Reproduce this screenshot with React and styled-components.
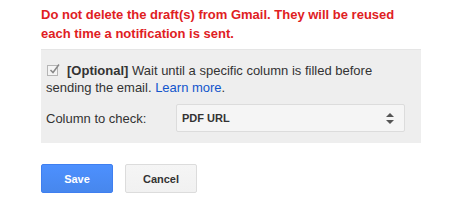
import React from "react";
import styled, { createGlobalStyle } from "styled-components";

const GlobalStyle = createGlobalStyle`
  body {
    margin: 0;
    background: #fff;
    font-family: Arial, "Liberation Sans", sans-serif;
  }
`;

const Page = styled.div`
  width: 380px;
  padding: 5px 0 0 41px;
`;

const Warning = styled.p`
  margin: 0 0 6px;
  color: #e0201f;
  font-size: 13px;
  font-weight: bold;
  line-height: 19px;
`;

const Panel = styled.div`
  background: #eeeeee;
  border-top: 1px solid #e5e5e5;
  padding: 12px 16px 11px 5px;
`;

const OptionText = styled.div`
  font-size: 13px;
  line-height: 17px;
  color: #333;
`;

const Check = styled.span`
  display: inline-block;
  vertical-align: -1px;
  width: 11px;
  height: 11px;
  margin: 0 9px 0 1px;
  border: 1px solid #b5b5b5;
  background: #f4f4f4;
  box-sizing: border-box;
  position: relative;

  svg {
    position: absolute;
    left: 0;
    top: -3px;
  }
`;

const Strong = styled.b`
  font-weight: bold;
`;

const LearnLink = styled.a`
  color: #1155cc;
  text-decoration: none;
`;

const FieldRow = styled.div`
  display: flex;
  align-items: center;
  margin-top: 8px;
`;

const FieldLabel = styled.label`
  width: 130px;
  font-size: 13px;
  color: #333;
`;

const Select = styled.div`
  flex: 1;
  height: 28px;
  box-sizing: border-box;
  border: 1px solid #dcdcdc;
  border-radius: 2px;
  background: #f5f5f5;
  display: flex;
  align-items: center;
  justify-content: space-between;
  padding: 0 10px 0 5px;
  font-size: 11px;
  font-weight: bold;
  color: #333;
`;

const Buttons = styled.div`
  display: flex;
  gap: 12px;
  margin-top: 21px;
`;

const Button = styled.button`
  width: 72px;
  height: 29px;
  box-sizing: border-box;
  border-radius: 2px;
  font-family: Arial, "Liberation Sans", sans-serif;
  font-size: 11px;
  font-weight: bold;
  padding: 0;
  border: 1px solid ${(p) => (p.$primary ? "#3f7ff0" : "#dcdcdc")};
  background: ${(p) =>
    p.$primary
      ? "linear-gradient(#4d90fe, #4787ed)"
      : "linear-gradient(#f5f5f5, #f1f1f1)"};
  color: ${(p) => (p.$primary ? "#fff" : "#333")};
`;

export default function App() {
  return (
    <Page>
      <GlobalStyle />
      <Warning>
        Do not delete the draft(s) from Gmail. They will be reused each time a
        notification is sent.
      </Warning>
      <Panel>
        <OptionText>
          <Check>
            <svg width="12" height="12" viewBox="0 0 12 12">
              <path
                d="M2.5 7 L5 9.5 L11 1.5"
                fill="none"
                stroke="#888"
                strokeWidth="1.5"
              />
            </svg>
          </Check>
          <Strong>[Optional]</Strong> Wait until a specific column is filled
          before sending the email. <LearnLink href="#">Learn more</LearnLink>.
        </OptionText>
        <FieldRow>
          <FieldLabel>Column to check:</FieldLabel>
          <Select>
            <span>PDF URL</span>
            <svg width="8" height="11" viewBox="0 0 8 11">
              <path d="M4 0 L8 4 L0 4 Z M0 7 L8 7 L4 11 Z" fill="#555" />
            </svg>
          </Select>
        </FieldRow>
      </Panel>
      <Buttons>
        <Button $primary>Save</Button>
        <Button>Cancel</Button>
      </Buttons>
    </Page>
  );
}
